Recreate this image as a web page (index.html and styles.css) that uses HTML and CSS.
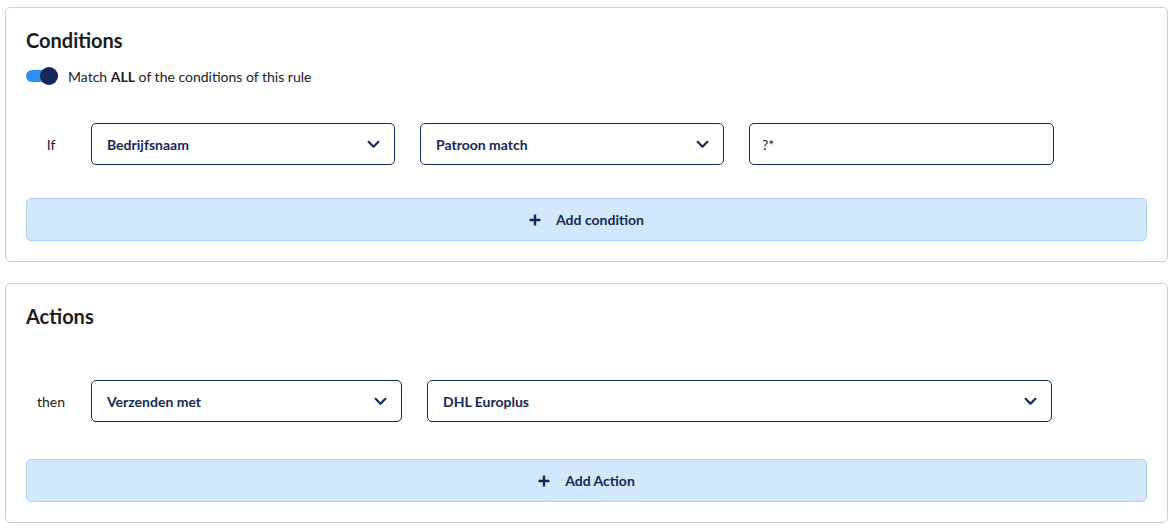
FILE: index.html
```html
<!DOCTYPE html>
<html>
<head>
<meta charset="utf-8">
<link rel="stylesheet" href="styles.css">
</head>
<body>
<section class="card">
  <h2 class="card-title">Conditions</h2>
  <div class="toggle-row">
    <span class="toggle"><span class="knob"></span></span>
    <span class="toggle-label">Match <b>ALL</b> of the conditions of this rule</span>
  </div>
  <div class="rule-row cond-row">
    <span class="row-label">If</span>
    <div class="select w303"><span>Bedrijfsnaam</span><svg class="chev" viewBox="0 0 12 8"><path d="M1.5 1.5 L6 6 L10.5 1.5"/></svg></div>
    <div class="select w304"><span>Patroon match</span><svg class="chev" viewBox="0 0 12 8"><path d="M1.5 1.5 L6 6 L10.5 1.5"/></svg></div>
    <div class="input w305"><span>?*</span></div>
  </div>
  <button class="add-btn cond-add"><svg class="plus" viewBox="0 0 12 12"><path d="M6 0.5 V11.5 M0.5 6 H11.5"/></svg><span>Add condition</span></button>
</section>
<section class="card card2">
  <h2 class="card-title">Actions</h2>
  <div class="rule-row act-row">
    <span class="row-label">then</span>
    <div class="select w311"><span>Verzenden met</span><svg class="chev" viewBox="0 0 12 8"><path d="M1.5 1.5 L6 6 L10.5 1.5"/></svg></div>
    <div class="select w625"><span>DHL Europlus</span><svg class="chev" viewBox="0 0 12 8"><path d="M1.5 1.5 L6 6 L10.5 1.5"/></svg></div>
  </div>
  <button class="add-btn act-add"><svg class="plus" viewBox="0 0 12 12"><path d="M6 0.5 V11.5 M0.5 6 H11.5"/></svg><span>Add Action</span></button>
</section>
</body>
</html>
```
FILE: styles.css
```css
* { box-sizing: border-box; }
body {
  margin: 7px 5px;
  font-family: Lato, "Liberation Sans", sans-serif;
  background: #fff;
  color: #1f1f1f;
}
.card {
  border: 1px solid #cfcfcf;
  border-radius: 5px;
  padding: 19px 20px 20px 20px;
  width: 1163px;
}
.card2 { margin-top: 21px; }
.card-title {
  margin: 0;
  font-size: 20px;
  line-height: 26px;
  font-weight: 700;
  color: #1c1c1c;
}
.toggle-row {
  display: flex;
  align-items: center;
  gap: 10px;
  margin-top: 14px;
  height: 18px;
}
.toggle {
  width: 32px;
  height: 12px;
  border-radius: 6px;
  background: #2d8ff3;
  position: relative;
}
.knob {
  position: absolute;
  right: 0;
  top: -3px;
  width: 18px;
  height: 18px;
  border-radius: 50%;
  background: #14295a;
}
.toggle-label { font-size: 14px; color: #222; }
.toggle-label b { font-weight: 700; }
.rule-row {
  display: flex;
  align-items: center;
  gap: 25px;
}
.cond-row { margin-top: 38px; }
.act-row { margin-top: 51px; }
.row-label {
  width: 50px;
  margin-right: -10px;
  text-align: center;
  font-size: 14px;
  color: #222;
}
.select, .input {
  height: 42px;
  border: 1px solid #14295a;
  border-radius: 5px;
  display: flex;
  align-items: center;
  justify-content: space-between;
  padding: 0 14px 0 15px;
  font-size: 14px;
  font-weight: 700;
  color: #14295a;
}
.input { font-weight: 400; padding-left: 12px; color: #222; }
.w303 { width: 304px; }
.w304 { width: 304px; }
.w305 { width: 305px; }
.w311 { width: 311px; }
.w625 { width: 625px; }
.chev {
  width: 13px;
  height: 9px;
  fill: none;
  stroke: #14295a;
  stroke-width: 2;
  stroke-linecap: round;
  stroke-linejoin: round;
}
.add-btn {
  display: flex;
  width: 100%;
  height: 43px;
  align-items: center;
  justify-content: center;
  gap: 15px;
  background: #d3e8fd;
  border: 1px solid #a9d3fa;
  border-radius: 5px;
  font-family: inherit;
  font-size: 14px;
  font-weight: 700;
  color: #14295a;
  cursor: pointer;
}
.cond-add { margin-top: 33px; }
.act-add { margin-top: 37px; }
.plus {
  width: 12px;
  height: 12px;
  fill: none;
  stroke: #14295a;
  stroke-width: 2.4;
}
```
